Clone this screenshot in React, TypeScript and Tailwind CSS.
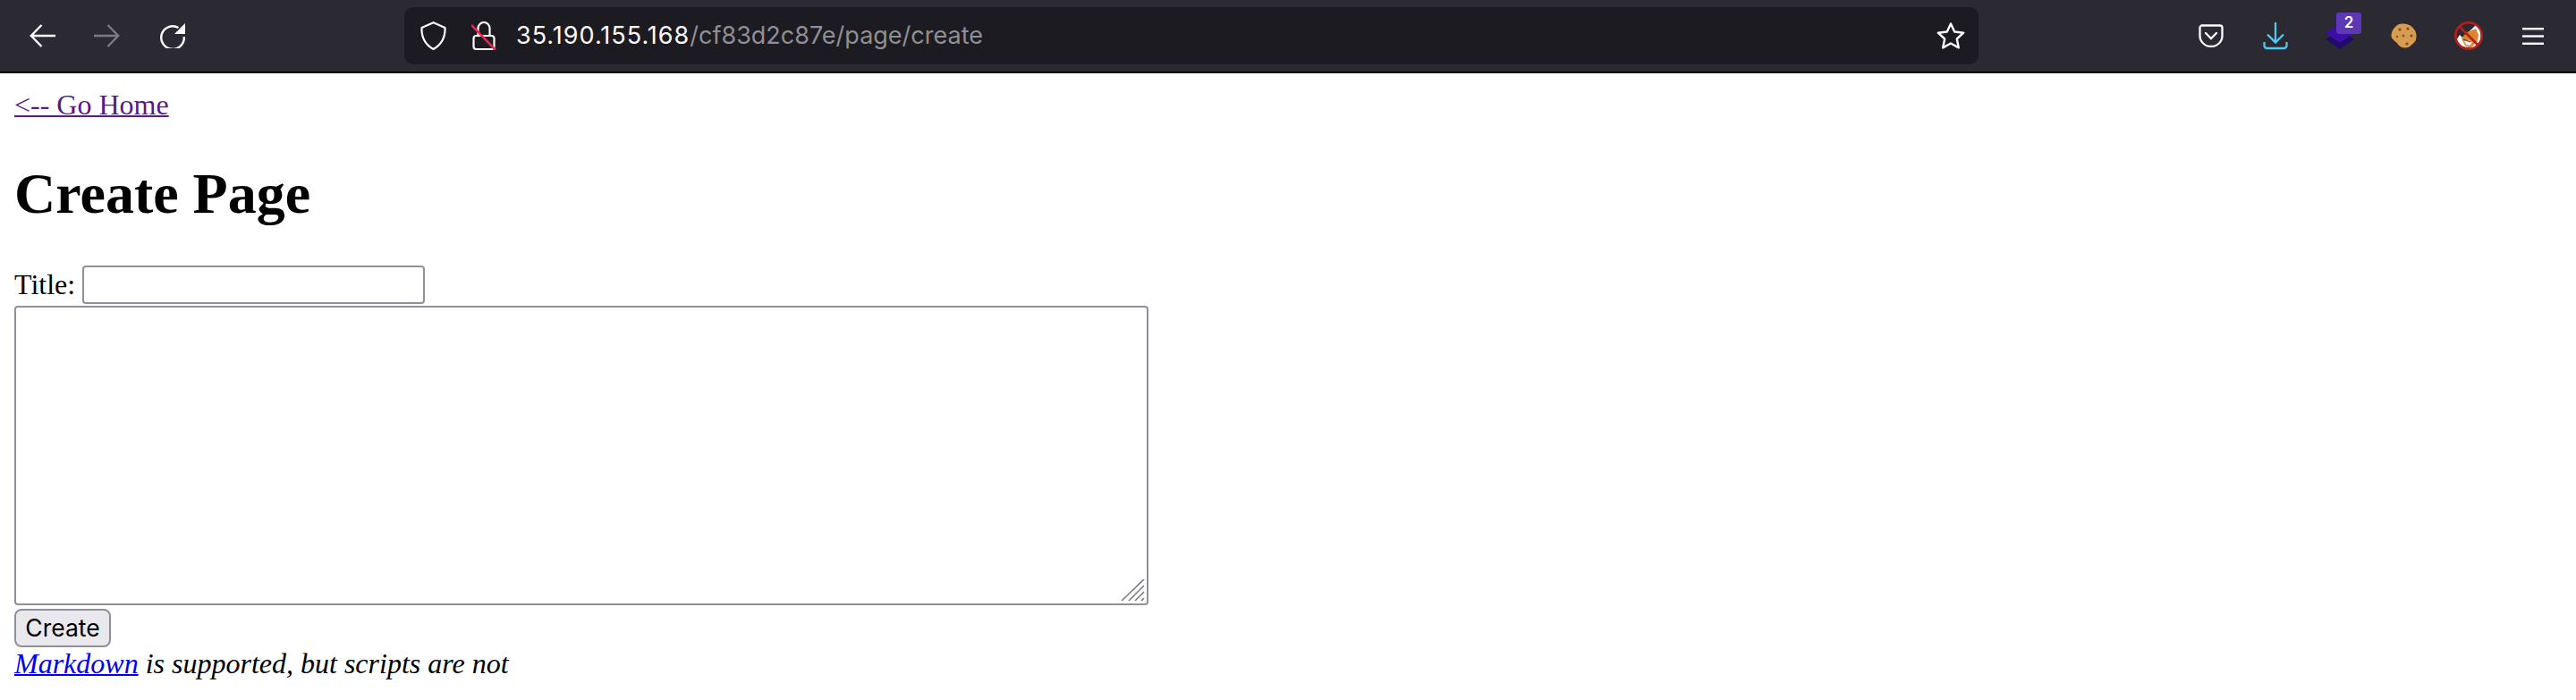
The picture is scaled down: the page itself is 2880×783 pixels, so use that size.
export default function App() {
  return (
    <div className="min-h-[783px] bg-white text-black font-['Liberation_Serif',serif]">
      <header className="flex h-[82px] items-center border-b-2 border-black bg-[#2b2a33]">
        <div className="flex w-[452px] shrink-0 items-center">
          <svg className="ml-[33px]" width="29" height="26" viewBox="0 0 29 26" fill="none" stroke="#fbfbfe" strokeWidth="2.4">
            <path d="M29 13H2M13.500 1 1.800 13 13.500 25" />
          </svg>
          <svg className="ml-[43px]" width="29" height="26" viewBox="0 0 29 26" fill="none" stroke="#7d7c83" strokeWidth="2.4">
            <path d="M0 13h27M15.500 1 27.200 13 15.500 25" />
          </svg>
          <svg className="ml-[44px]" width="29" height="28" viewBox="0 0 29 28" fill="none">
            <path d="M21.500 5A12.800 12.800 0 1 0 27.800 15" stroke="#fbfbfe" strokeWidth="2.4" />
            <path d="M29 0v12H17z" fill="#fbfbfe" />
          </svg>
        </div>
        <div className="flex h-[64px] w-[1760px] shrink-0 items-center rounded-[10px] bg-[#1c1b22]">
          <svg className="ml-[18px]" width="29" height="32" viewBox="0 0 29 32" fill="none" stroke="#fbfbfe" strokeWidth="2.2">
            <path d="M14.500 1.200 27.500 7c.5 10-2.500 18-13 24C4 25 1 17 1.500 7Z" strokeLinejoin="round" />
          </svg>
          <svg className="ml-[28px]" width="28" height="32" viewBox="0 0 28 32" fill="none">
            <path d="M7.500 16V7.500a6.500 6.500 0 0 1 13 0V16" stroke="#fbfbfe" strokeWidth="2.2" />
            <rect x="2.500" y="16" width="23" height="15" rx="3" stroke="#fbfbfe" strokeWidth="2.200" />
            <path d="M0 4 27 32" stroke="#e22850" strokeWidth="2.6" />
          </svg>
          <div className="ml-[22px] pt-[1px] font-['Inter',sans-serif] text-[27px] text-[#8f8f94]">
            <span className="tracking-[1px] text-[#fbfbfe]">35.190.155.168</span>/cf83d2c87e/page/create
          </div>
          <svg className="ml-auto mr-[15px]" width="32" height="31" viewBox="0 0 32 31" fill="none" stroke="#fbfbfe" strokeWidth="2.4" strokeLinejoin="round">
            <path d="m16 1.500 4.200 9 10 1.200-7.400 6.800 2 9.900L16 23.500l-8.800 4.900 2-9.900-7.400-6.800 10-1.200Z" />
          </svg>
        </div>
        <div className="flex flex-1 items-center">
          <svg className="ml-[246px]" width="28" height="26" viewBox="0 0 28 26" fill="none" stroke="#fbfbfe" strokeWidth="2.300">
            <path d="M4 1.500h20A2.500 2.500 0 0 1 26.500 4v9a12.500 12 0 0 1-25 0V4A2.500 2.500 0 0 1 4 1.500Z" />
            <path d="m8 10 6 6 6-6" strokeLinecap="round" />
          </svg>
          <svg className="ml-[44px]" width="28" height="31" viewBox="0 0 28 31" fill="none" stroke="#53c8ee" strokeWidth="2.300">
            <path d="M14 0v22M5 13.500l9 9 9-9M1.500 22v4a3 3 0 0 0 3 3h19a3 3 0 0 0 3-3v-4" />
          </svg>
          <div className="relative ml-[42px] h-[29px] w-[32px]">
            <svg className="absolute left-0 top-0" width="32" height="29" viewBox="0 0 32 29">
              <path d="M16 7 32 18 16 29 0 18Z" fill="#1f0b6b" />
              <path d="M16 0 32 11 16 22 0 11Z" fill="#3c0ea3" />
            </svg>
            <span className="absolute left-[12px] top-[-12px] flex h-[24px] w-[28px] items-center justify-center rounded-[3px] bg-[#5d38b4] font-['Inter',sans-serif] text-[17px] font-semibold text-white">
              2
            </span>
          </div>
          <svg className="ml-[41px] blur-[0.6px]" width="29" height="28" viewBox="0 0 29 28">
            <path d="M13 .5c5 0 8 1 11 4s4.500 6 4.500 9.500-.5 6-3 8c-2 2-5 5.500-9 5.500-4 0-7-1.500-9-4.500S.5 18 .5 14 2 7 4.500 4.500 9 .5 13 .5Z" fill="#d89c50" />
            <circle cx="10" cy="7" r="1.600" fill="#7a4a22" />
            <circle cx="19" cy="6" r="1.600" fill="#7a4a22" />
            <circle cx="14" cy="14" r="1.500" fill="#8a5628" />
            <circle cx="23" cy="14" r="1.600" fill="#7a4a22" />
            <circle cx="7" cy="15" r="1.200" fill="#8a5628" />
            <circle cx="18" cy="23" r="1.600" fill="#7a4a22" />
          </svg>
          <svg className="ml-[42px]" width="32" height="32" viewBox="0 0 32 32">
            <circle cx="16" cy="16" r="15" fill="#2b2a33" />
            <path d="M2 21 6 15 9 18 20 8 25 3 29 9 30 20 22 30 8 28Z" fill="#fff" />
            <path d="M8 19 14 12 24 8 27 15 26 22 18 30 12 27Z" fill="#dd8530" />
            <path d="M11 22 16 21 20 24 17 27 13 26Z" fill="#e8eef2" />
            <path d="M10 20 18 23" stroke="#3b3b3b" strokeWidth="1" fill="none" />
            <circle cx="16" cy="16" r="14.700" fill="none" stroke="#b5201e" strokeWidth="2.600" />
            <path d="M6 6 26 26" stroke="#b5201e" strokeWidth="2.600" />
          </svg>
          <svg className="ml-[44px]" width="24" height="19" viewBox="0 0 24 19" fill="#fbfbfe">
            <rect y="0" width="24" height="2.400" />
            <rect y="8.300" width="24" height="2.400" />
            <rect y="16.600" width="24" height="2.400" />
          </svg>
        </div>
      </header>
      <main className="px-[16px] pt-[11px] text-[32px]">
        <a href="#" className="leading-[37px] text-[#551a8b] underline decoration-2">&lt;-- Go Home</a>
        <h1 className="mb-[41px] mt-[39px] text-[64px] font-bold leading-[74px]">Create Page</h1>
        <div className="flex h-[47px] items-center">
          <span className="leading-[37px]">Title:</span>
          <input className="ml-[8px] h-[43px] w-[383px] rounded-[4px] border-2 border-[#8f8f9d] bg-white" />
        </div>
        <div className="relative h-[335px] w-[1268px]">
          <textarea className="block h-full w-full resize-none rounded-[4px] border-2 border-[#8f8f9d] bg-white" />
          <svg className="absolute bottom-[4px] right-[4px]" width="27" height="26" viewBox="0 0 27 26" fill="none" stroke="#77767f" strokeWidth="1.500">
            <path d="M1 25 26 1M9 25 26 8M16 25 26 15M23 25l3-3" />
          </svg>
        </div>
        <button className="mt-[4px] block h-[43px] w-[108px] rounded-[8px] border-2 border-[#8f8f9d] bg-[#e9e9ed] font-['Inter',sans-serif] text-[26.500px] text-black">
          Create
        </button>
        <p className="italic leading-[37px]">
          <a href="#" className="text-[#0000ee] underline decoration-2">Markdown</a> is supported, but scripts are not
        </p>
      </main>
    </div>
  );
}
